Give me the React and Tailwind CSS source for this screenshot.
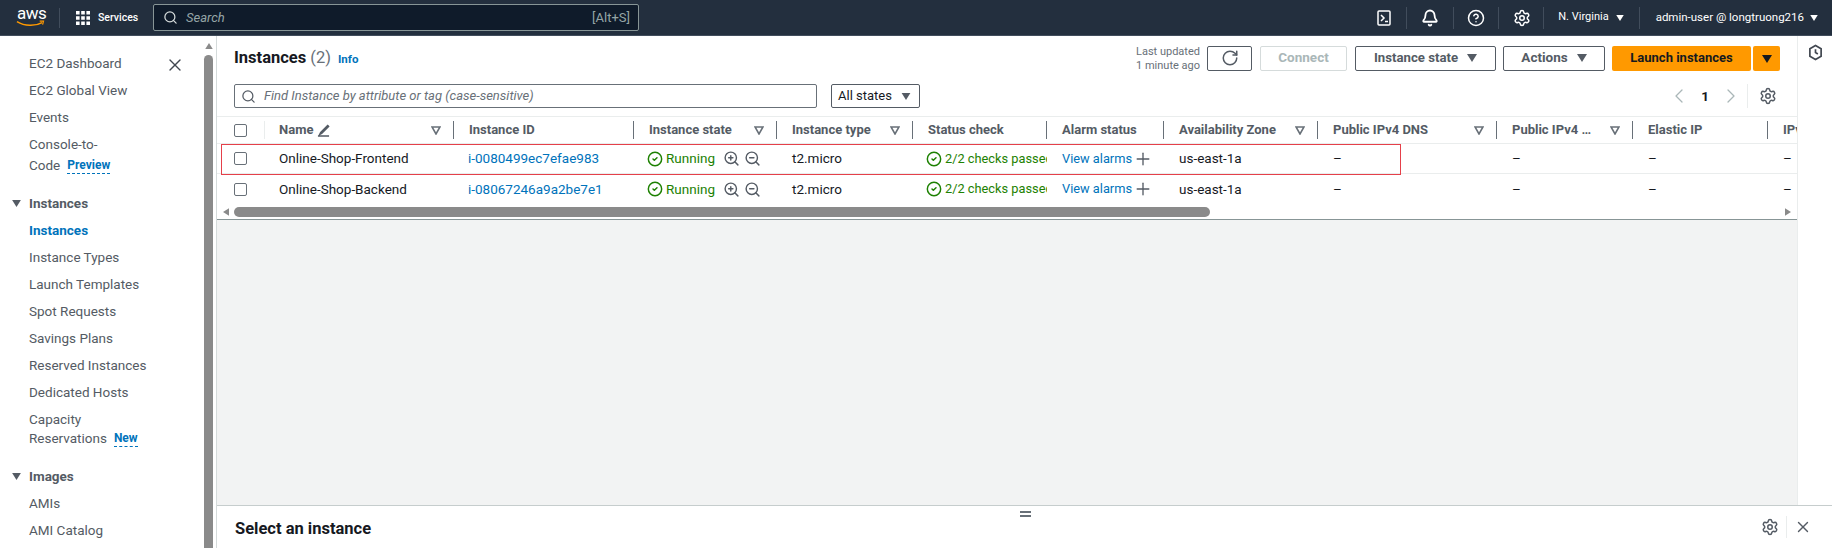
import React from "react";
import {
  Bell,
  ChevronLeft,
  ChevronRight,
  CircleCheck,
  CircleHelp,
  Plus,
  RotateCw,
  Search,
  Settings,
  X,
  ZoomIn,
  ZoomOut,
} from "lucide-react";

const FONT = "font-['Roboto',sans-serif]";
const COLS = "grid-cols-[47px_190px_180px_143px_136px_134px_117px_154px_179px_136px_135px_140px]";

const Caret = ({ className = "" }) => (
  <svg viewBox="0 0 10 8" className={className} fill="currentColor">
    <path d="M0 0h10L5 8z" />
  </svg>
);

const FilterIcon = () => (
  <svg viewBox="0 0 10 9" className="w-[10px] h-[9px] text-[#687078]" fill="none" stroke="currentColor" strokeWidth="1.6">
    <path d="M1 1h8L5 8z" />
  </svg>
);

const Checkbox = () => <span className="block w-[13px] h-[13px] rounded-[2px] border border-[#687078] bg-white" />;

const NavItem = ({ children, active }) => (
  <div className={`h-[27px] pl-[29px] flex items-center ${active ? "text-[#0073bb] font-bold" : "text-[#545b64]"}`}>{children}</div>
);

const NavSection = ({ children }) => (
  <div className="h-[27px] pl-[12px] flex items-center gap-[8px] font-bold text-[#545b64]">
    <Caret className="w-[9px] h-[7px] text-[#545b64]" />
    {children}
  </div>
);

const Badge = ({ children }) => (
  <span className="ml-[7px] text-[12px] leading-[15px] font-bold text-[#0073bb] border-b border-dashed border-[#0073bb]">{children}</span>
);

const HeaderSep = () => <span className="block w-px h-[22px] bg-[#414d5c]" />;

const TopBar = () => (
  <header className="h-[36px] shrink-0 bg-[#232f3e] border-b border-[#414d5c] flex items-center text-white text-[11.5px]">
    <div className="w-[59px] pl-[16px] relative h-full">
      <span className="absolute left-[17px] top-[3px] text-[17px] leading-[20px] tracking-[-0.5px]">aws</span>
      <svg viewBox="0 0 30 8" className="absolute left-[16px] top-[20px] w-[29px] h-[8px]" fill="none">
        <path d="M1 1.5c8 5 19 5 26 1" stroke="#ff9900" strokeWidth="1.6" />
        <path d="M24.5 1h4l-1 3.6" stroke="#ff9900" strokeWidth="1.2" />
      </svg>
    </div>
    <span className="w-px h-[20px] bg-[#414d5c]" />
    <svg viewBox="0 0 14 14" className="ml-[16px] w-[14px] h-[14px]" fill="white">
      <path d="M0 0h3.6v3.6H0zM5.2 0h3.6v3.6H5.2zM10.4 0H14v3.6h-3.6zM0 5.2h3.6v3.6H0zM5.2 5.2h3.6v3.6H5.2zM10.4 5.2H14v3.6h-3.6zM0 10.4h3.6V14H0zM5.2 10.4h3.6V14H5.2zM10.4 10.4H14V14h-3.6z" />
    </svg>
    <span className="ml-[8px] w-[40px] text-[10.5px] font-medium whitespace-nowrap">Services</span>
    <div className="ml-[15px] w-[486px] h-[27px] bg-[#0f1b2a] border border-[#879596] rounded-[2px] flex items-center pl-[9px] pr-[8px]">
      <Search size={15} strokeWidth={2} className="text-[#d5dbdb]" />
      <span className="ml-[8px] text-[13px] italic text-[#95a5a6]">Search</span>
      <span className="ml-auto text-[13px] text-[#95a5a6]">[Alt+S]</span>
    </div>
    <div className="ml-auto flex items-center h-full">
      <svg viewBox="0 0 14 16" className="w-[14px] h-[16px]" fill="none" stroke="white" strokeWidth="1.5">
        <rect x="1" y="1" width="12" height="14" rx="1" />
        <path d="M4 5l3 3-3 3M8 11.5h3" />
      </svg>
      <span className="ml-[15px] mr-[14px]"><HeaderSep /></span>
      <Bell size={18} strokeWidth={2.4} />
      <span className="ml-[14px] mr-[13px]"><HeaderSep /></span>
      <CircleHelp size={18} strokeWidth={2} />
      <span className="ml-[13px] mr-[14px]"><HeaderSep /></span>
      <Settings size={18} strokeWidth={2} />
      <span className="ml-[12px]"><HeaderSep /></span>
      <span className="ml-[14px] text-[11px]">N. Virginia</span>
      <Caret className="ml-[7px] w-[8px] h-[6px]" />
      <span className="ml-[15px]"><HeaderSep /></span>
      <span className="ml-[16px]">admin-user @ longtruong216</span>
      <Caret className="ml-[6px] mr-[14px] w-[8px] h-[6px]" />
    </div>
  </header>
);

const Sidebar = () => (
  <aside className="w-[216px] shrink-0 relative overflow-hidden text-[13.5px] pt-[14px]">
    <NavItem>EC2 Dashboard</NavItem>
    <NavItem>EC2 Global View</NavItem>
    <NavItem>Events</NavItem>
    <div className="pl-[29px] text-[#545b64] leading-[21px] pt-[3px]">
      <div>Console-to-</div>
      <div className="flex items-center">
        Code<Badge>Preview</Badge>
      </div>
    </div>
    <div className="mt-[14px]"><NavSection>Instances</NavSection></div>
    <NavItem active>Instances</NavItem>
    <NavItem>Instance Types</NavItem>
    <NavItem>Launch Templates</NavItem>
    <NavItem>Spot Requests</NavItem>
    <NavItem>Savings Plans</NavItem>
    <NavItem>Reserved Instances</NavItem>
    <NavItem>Dedicated Hosts</NavItem>
    <div className="pl-[29px] text-[#545b64] leading-[19px] pt-[4px]">
      <div>Capacity</div>
      <div className="flex items-center">
        Reservations<Badge>New</Badge>
      </div>
    </div>
    <div className="mt-[15px]"><NavSection>Images</NavSection></div>
    <NavItem>AMIs</NavItem>
    <NavItem>AMI Catalog</NavItem>
    <X size={20} strokeWidth={1.6} className="absolute left-[165px] top-[19px] text-[#414750]" />
    <Caret className="absolute left-[204px] top-[7px] w-[10px] h-[6px] rotate-180 text-[#8a8a8a]" />
    <div className="absolute left-[204px] top-[19px] bottom-0 w-[9px] rounded-t-[5px] bg-[#8a8a8a]" />
  </aside>
);

const Button = ({ children, className = "" }) => (
  <button className={`h-[25px] pb-[2px] rounded-[2px] border border-[#545b64] bg-white font-bold text-[#545b64] flex items-center justify-center ${className}`}>{children}</button>
);

const Toolbar = () => (
  <div className="pl-[17px] pr-[17px] pt-[10px] pb-[8px]">
    <div className="flex items-center h-[25px]">
      <h1 className="text-[16.5px] font-bold text-[#16191f]">
        Instances <span className="font-normal text-[#687078]">(2)</span>
      </h1>
      <span className="ml-[7px] mt-[2px] text-[11.5px] font-bold text-[#0073bb]">Info</span>
      <div className="ml-auto text-right text-[11px] leading-[14px] text-[#687078] mr-[7px]">
        <div>Last updated</div>
        <div>1 minute ago</div>
      </div>
      <Button className="w-[45px]"><RotateCw size={18} strokeWidth={2} /></Button>
      <Button className="ml-[8px] w-[87px] border-[#d5dbdb] text-[#aab7b8]">Connect</Button>
      <Button className="ml-[8px] w-[141px] gap-[9px] text-[13.2px]">Instance state<Caret className="w-[10px] h-[8px]" /></Button>
      <Button className="ml-[7px] w-[102px] gap-[9px]">Actions<Caret className="w-[10px] h-[8px]" /></Button>
      <button className="ml-[7px] w-[139px] h-[25px] pb-[2px] rounded-[2px] bg-[#ff9900] font-bold text-[13px] text-[#16191f]">Launch instances</button>
      <button className="ml-[2px] w-[27px] h-[25px] rounded-[2px] bg-[#ff9900] flex items-center justify-center text-[#16191f]"><Caret className="w-[10px] h-[8px]" /></button>
    </div>
    <div className="flex items-center h-[24px] mt-[13px]">
      <div className="w-[583px] h-[24px] border border-[#687078] rounded-[2px] flex items-center pl-[6px]">
        <Search size={15} strokeWidth={2} className="text-[#545b64]" />
        <span className="ml-[8px] italic text-[13px] text-[#687078]">Find Instance by attribute or tag (case-sensitive)</span>
      </div>
      <div className="ml-[14px] w-[89px] h-[24px] border border-[#545b64] rounded-[2px] flex items-center justify-between pl-[6px] pr-[8px] text-[13px] text-[#16191f]">
        All states<Caret className="w-[10px] h-[7px] text-[#545b64]" />
      </div>
      <div className="ml-auto flex items-center text-[#16191f]">
        <ChevronLeft size={24} strokeWidth={1.3} className="text-[#aab7b8]" />
        <span className="ml-[6px] w-[16px] text-center font-bold">1</span>
        <ChevronRight size={24} strokeWidth={1.3} className="ml-[6px] text-[#aab7b8]" />
        <span className="ml-[4px] w-px h-[24px] bg-[#eaeded]" />
        <Settings size={18} strokeWidth={2} className="ml-[11px] mr-[3px] text-[#545b64]" />
      </div>
    </div>
  </div>
);

const columns = [
  { label: "Name", filter: true, edit: true },
  { label: "Instance ID" },
  { label: "Instance state", filter: true },
  { label: "Instance type", filter: true },
  { label: "Status check" },
  { label: "Alarm status" },
  { label: "Availability Zone", filter: true },
  { label: "Public IPv4 DNS", filter: true },
  { label: "Public IPv4 …", filter: true },
  { label: "Elastic IP" },
  { label: "IPv6 IPs", last: true },
];

const rows = [
  { name: "Online-Shop-Frontend", id: "i-0080499ec7efae983" },
  { name: "Online-Shop-Backend", id: "i-08067246a9a2be7e1" },
];

const Row = ({ row, last }) => (
  <div className={`grid ${COLS} h-[30px] items-center text-[#16191f] ${last ? "" : "border-b border-[#eaeded]"}`}>
    <div className="pl-[17px]"><Checkbox /></div>
    <div className="pl-[15px]">{row.name}</div>
    <div className="pl-[14px] text-[#0073bb]">{row.id}</div>
    <div className="pl-[13px] flex items-center text-[#1d8102]">
      <CircleCheck size={16} strokeWidth={2.2} />
      <span className="ml-[3px]">Running</span>
      <ZoomIn size={17} strokeWidth={2} className="ml-[8px] text-[#545b64]" />
      <ZoomOut size={17} strokeWidth={2} className="ml-[4px] text-[#545b64]" />
    </div>
    <div className="pl-[15px]">t2.micro</div>
    <div className="pl-[13px] flex items-center text-[12.8px] text-[#1d8102] overflow-hidden whitespace-nowrap">
      <CircleCheck size={16} strokeWidth={2.2} className="shrink-0" />
      <span className="ml-[3px]">2/2 checks passed</span>
    </div>
    <div className="pl-[15px] flex items-center text-[12.8px]">
      <span className="text-[#0073bb]">View alarms</span>
      <Plus size={20} strokeWidth={1.6} className="ml-[1px] text-[#545b64]" />
    </div>
    <div className="pl-[15px]">us-east-1a</div>
    <div className="pl-[15px]">–</div>
    <div className="pl-[15px]">–</div>
    <div className="pl-[15px]">–</div>
    <div className="pl-[15px]">–</div>
  </div>
);

const InstancesTable = () => (
  <div className="relative overflow-hidden border-t border-[#eaeded]">
    <div className={`grid ${COLS} h-[27px] items-center border-b border-[#eaeded] text-[13px] font-bold text-[#545b64]`}>
      <div className="pl-[17px] flex items-center justify-between">
        <Checkbox />
        <span className="w-px h-[18px] bg-[#eaeded] mr-[-1px]" />
      </div>
      {columns.map((col) => (
        <div key={col.label} className="pl-[15px] flex items-center whitespace-nowrap h-[18px]">
          <span>{col.label}</span>
          {col.edit && (
            <svg viewBox="0 0 14 14" className="ml-[4px] w-[13px] h-[13px]" fill="none" stroke="#545b64" strokeWidth="1.6">
              <path d="M12 1L4 9l-1 2 2-1 8-8M1 13h12" />
            </svg>
          )}
          {!col.last && <span className="ml-auto" />}
          {col.filter && <span className="mr-[12px]"><FilterIcon /></span>}
          {!col.last && <span className="w-px h-[18px] bg-[#687078]" />}
        </div>
      ))}
    </div>
    {rows.map((row, i) => (
      <Row key={row.id} row={row} last={i === rows.length - 1} />
    ))}
    <div className="h-[15px] relative">
      <Caret className="absolute left-[4px] top-[5px] w-[10px] h-[6px] rotate-90 text-[#8a8a8a]" />
      <div className="absolute left-[17px] top-[3px] w-[976px] h-[10px] rounded-[5px] bg-[#8a8a8a]" />
      <Caret className="absolute right-[4px] top-[5px] w-[10px] h-[6px] -rotate-90 text-[#8a8a8a]" />
    </div>
    {/* annotation drawn over the first row */}
    <div className="absolute left-[4px] top-[27px] w-[1180px] h-[31px] border border-[#e5404a] pointer-events-none" />
  </div>
);

export default function App() {
  return (
    <div className={`w-[1832px] h-[548px] overflow-hidden flex flex-col bg-white text-[13.5px] ${FONT}`}>
      <TopBar />
      <div className="flex-1 min-h-0 flex">
        <Sidebar />
        <main className="flex-1 min-w-0 flex flex-col border-l border-[#d5dbdb]">
          <div className="flex-1 min-h-0 flex">
            <div className="flex-1 min-w-0 flex flex-col">
              <Toolbar />
              <InstancesTable />
              <div className="flex-1 bg-[#f2f3f3] border-t border-[#879596]" />
            </div>
            <div className="w-[35px] shrink-0 border-l border-[#eaeded] flex justify-center pt-[8px]">
              <svg viewBox="0 0 16 18" className="w-[15px] h-[17px]" fill="none" stroke="#414750" strokeWidth="1.8">
                <path d="M8 1.5l6 3.5v8l-6 3.5-6-3.5V5z" />
                <path d="M8 5.5V9l2.5 1.5" />
              </svg>
            </div>
          </div>
          <div className="relative h-[43px] shrink-0 border-t border-[#c6cdcd] flex items-center pl-[18px] pr-[20px]">
            <h2 className="pt-[4px] text-[16.5px] font-bold text-[#16191f]">Select an instance</h2>
            <div className="absolute left-[803px] top-[5px] w-[11px] h-[6px] border-y-2 border-[#687078]" />
            <Settings size={18} strokeWidth={2} className="ml-auto text-[#545b64]" />
            <span className="mx-[7px] w-px h-[22px] bg-[#eaeded]" />
            <X size={18} strokeWidth={1.8} className="text-[#545b64]" />
          </div>
        </main>
      </div>
    </div>
  );
}
